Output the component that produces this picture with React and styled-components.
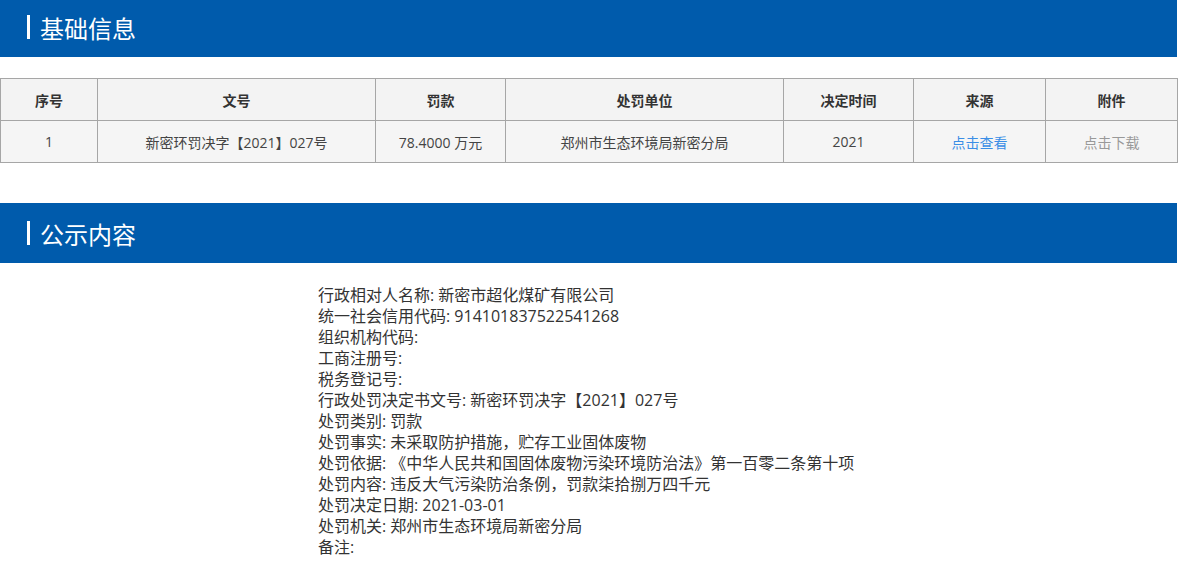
import styled, { createGlobalStyle } from "styled-components";

const GlobalStyle = createGlobalStyle`
    body {
        margin: 0;
        background: #fff;
        font-family: "Open Sans", "Noto Sans CJK SC", sans-serif;
        color: #333;
    }
`;

const Page = styled.div`
    width: 1177px;
    margin-top: -3px;
`;

const SectionBar = styled.div`
    display: flex;
    align-items: center;
    height: 60px;
    background: #005bac;
    padding-left: 27px;
    margin-top: ${(props) => props.gap || 0}px;
    color: #fff;
    font-size: 24px;
    font-family: "Noto Sans CJK SC", sans-serif;
    box-sizing: border-box;
`;

const BarMark = styled.span`
    display: inline-block;
    width: 3px;
    height: 24px;
    background: #fff;
    margin-right: 10px;
`;

const Table = styled.table`
    width: 100%;
    margin-top: 21px;
    border-collapse: collapse;
    table-layout: fixed;
    font-size: 14px;
    & th, & td {
        border: 1px solid #a6a6a6;
        height: 41px;
        padding: 0;
        text-align: center;
    }
    & th {
        background: #f3f3f3;
        font-weight: bold;
        color: #333;
    }
    & td {
        background: #f5f5f5;
        color: #444;
    }
`;

const LinkText = styled.span`
    color: ${(props) => (props.muted ? "#999" : "#3a8ee6")};
    cursor: pointer;
`;

const Content = styled.div`
    padding: 22px 0 0 318px;
    font-size: 16px;
    line-height: 21px;
    color: #333;
`;

const Line = styled.div`
    white-space: nowrap;
`;

const columns = [
    { title: "序号", width: 97 },
    { title: "文号", width: 278 },
    { title: "罚款", width: 130 },
    { title: "处罚单位", width: 278 },
    { title: "决定时间", width: 130 },
    { title: "来源", width: 132 },
    { title: "附件", width: 132 },
];

const lines = [
    "行政相对人名称: 新密市超化煤矿有限公司",
    "统一社会信用代码: 914101837522541268",
    "组织机构代码:",
    "工商注册号:",
    "税务登记号:",
    "行政处罚决定书文号: 新密环罚决字【2021】027号",
    "处罚类别: 罚款",
    "处罚事实: 未采取防护措施，贮存工业固体废物",
    "处罚依据: 《中华人民共和国固体废物污染环境防治法》第一百零二条第十项",
    "处罚内容: 违反大气污染防治条例，罚款柒拾捌万四千元",
    "处罚决定日期: 2021-03-01",
    "处罚机关: 郑州市生态环境局新密分局",
    "备注:",
];

const App = () => {
    return (
        <Page>
            <GlobalStyle />
            <SectionBar>
                <BarMark />
                基础信息
            </SectionBar>
            <Table>
                <colgroup>
                    {columns.map((c) => (
                        <col key={c.title} style={{ width: c.width }} />
                    ))}
                </colgroup>
                <thead>
                    <tr>
                        {columns.map((c) => (
                            <th key={c.title}>{c.title}</th>
                        ))}
                    </tr>
                </thead>
                <tbody>
                    <tr>
                        <td>1</td>
                        <td>新密环罚决字【2021】027号</td>
                        <td>78.4000 万元</td>
                        <td>郑州市生态环境局新密分局</td>
                        <td>2021</td>
                        <td><LinkText>点击查看</LinkText></td>
                        <td><LinkText muted>点击下载</LinkText></td>
                    </tr>
                </tbody>
            </Table>
            <SectionBar gap={40}>
                <BarMark />
                公示内容
            </SectionBar>
            <Content>
                {lines.map((l) => (
                    <Line key={l}>{l}</Line>
                ))}
            </Content>
        </Page>
    );
};

export default App;
